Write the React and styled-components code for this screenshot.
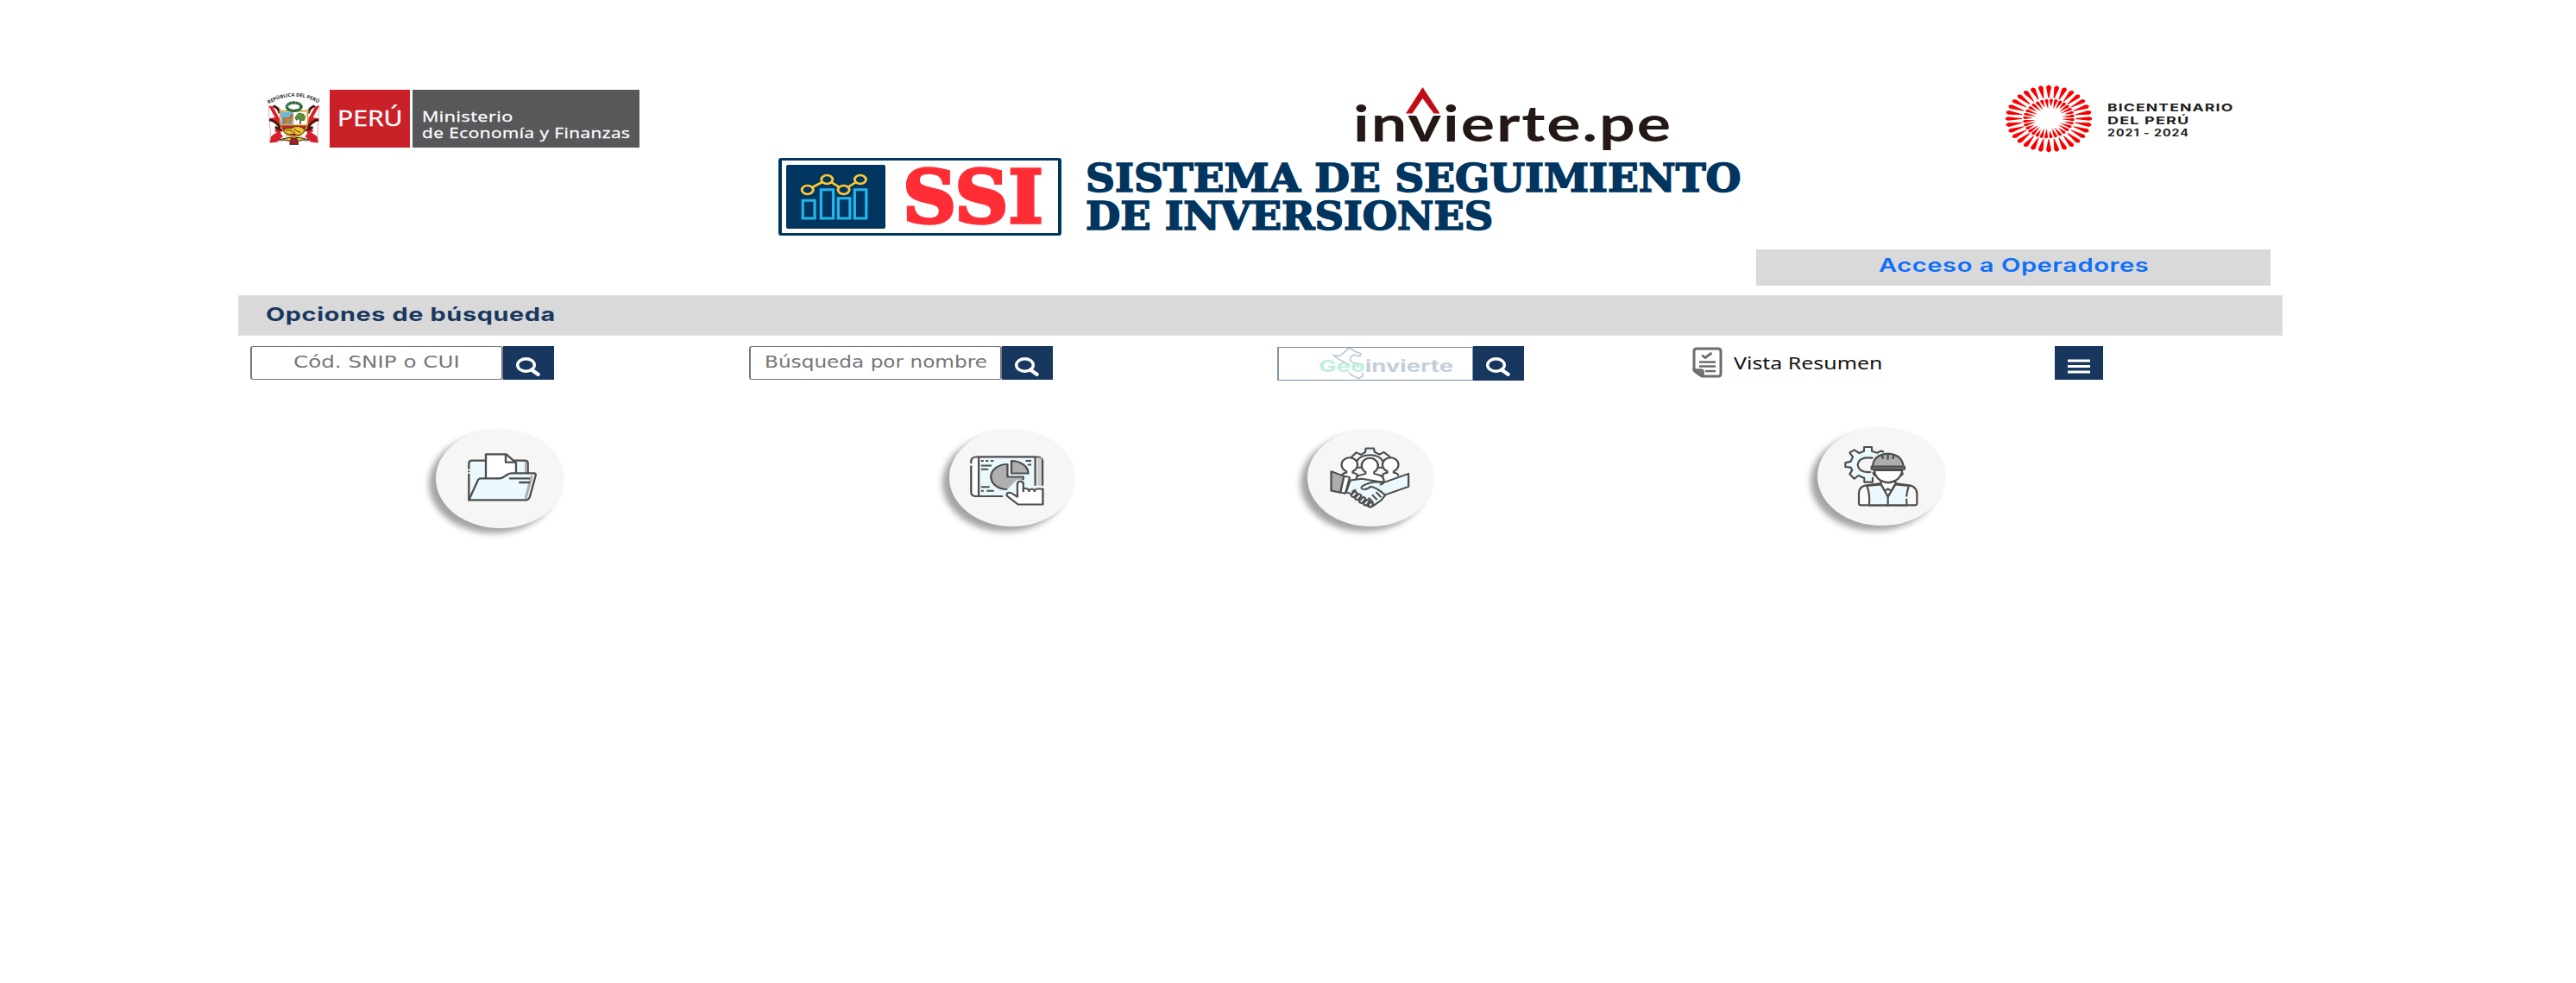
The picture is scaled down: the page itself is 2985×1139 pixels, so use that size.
import React, { useLayoutEffect, useRef, useState } from 'react';
import styled, { createGlobalStyle } from 'styled-components';

const navy = '#17375e';
const brand = '#00355f';
const ink = '#4d4d4d';
const ice = '#ebf9ff';

const Global = createGlobalStyle`
  * { box-sizing: border-box; }
  body { margin: 0; background: #fff; font-family: Inter, "Open Sans", sans-serif; }
`;

const Page = styled.main`
  display: flex;
  flex-direction: column;
  width: 2985px;
  height: 1139px;
  overflow: hidden;
  background: #fff;
`;

const FitBox = styled.span`
  display: block;
  flex: none;
  width: ${(p) => p.$w}px;
  height: ${(p) => p.$lh}px;
  margin: ${(p) => p.$m || '0'};
  white-space: nowrap;
  font-family: ${(p) => p.$font || 'Inter, sans-serif'};
  font-size: ${(p) => p.$size}px;
  font-weight: ${(p) => p.$weight || 400};
  line-height: ${(p) => p.$lh}px;
  letter-spacing: ${(p) => p.$ls || 0}px;
  -webkit-text-stroke: ${(p) => p.$stroke || 0}px ${(p) => p.$color};
  color: ${(p) => p.$color};
`;
const FitInner = styled.span`
  display: inline-block;
  transform-origin: 0 50%;
`;

/* Text stretched horizontally so that it fills a given width */
function Fit({ children, w, lh, m, font, size, weight, color, ls, stroke }) {
  const ref = useRef(null);
  const [k, setK] = useState(1);
  useLayoutEffect(() => {
    const natural = ref.current.offsetWidth;
    if (natural) setK(w / natural);
  }, [w]);
  return (
    <FitBox $w={w} $lh={lh} $m={m} $font={font} $size={size} $weight={weight} $color={color} $ls={ls} $stroke={stroke}>
      <FitInner ref={ref} style={{ transform: `scaleX(${k})` }}>{children}</FitInner>
    </FitBox>
  );
}

/* ---------- header ---------- */
const LogoRow = styled.header`
  display: flex;
  align-items: flex-start;
  height: 180px;
  padding: 95px 0 0 305px;
`;
const Ministry = styled.div`
  display: flex;
  gap: 3px;
  width: 436px;
  height: 67px;
  margin-top: 9px;
`;
const Emblem = styled.svg`
  width: 74px;
  height: 67px;
  flex: none;
`;
const RedBox = styled.div`
  width: 93px;
  height: 67px;
  padding: 12px 0 0 9px;
  background: #c92127;
`;
const GreyBox = styled.div`
  width: 263px;
  height: 67px;
  padding: 21px 0 0 11px;
  background: #58585a;
`;
const InvierteLogo = styled.svg`
  width: 376px;
  height: 84px;
  margin-left: 825px;
  flex: none;
`;
const Bicentenary = styled.div`
  display: flex;
  margin-left: 379px;
`;
const Burst = styled.svg`
  width: 106px;
  height: 84px;
  flex: none;
`;
const BicentenaryText = styled.div`
  display: flex;
  flex-direction: column;
  padding: 22px 0 0 15px;
`;

const TitleRow = styled.div`
  display: flex;
  align-items: flex-start;
  height: 109px;
  padding: 3px 0 0 902px;
`;
const SsiBox = styled.div`
  display: flex;
  width: 328px;
  height: 90px;
  padding: 5px 5px;
  border: solid ${brand};
  border-width: 3px 4px;
  border-radius: 3px;
`;
const ChartTile = styled.div`
  width: 115px;
  height: 74px;
  border-radius: 2px;
  background: ${brand};
`;
const ChartSvg = styled.svg`
  display: block;
  width: 115px;
  height: 74px;
`;
const Title = styled.h1`
  display: flex;
  flex-direction: column;
  margin: 0 0 0 28px;
`;

/* ---------- bars ---------- */
const AccessBar = styled.a`
  display: flex;
  justify-content: center;
  width: 596px;
  height: 42px;
  margin-left: 2035px;
  padding-top: 3px;
  background: #d9d9d9;
  text-decoration: none;
`;
const OptionsBar = styled.div`
  width: 2369px;
  height: 47px;
  margin: 11px 0 0 276px;
  padding: 5px 0 0 31px;
  border: 1px solid #dee2e6;
  background: #d9d9d9;
`;

const SearchRow = styled.div`
  display: flex;
  align-items: flex-start;
  height: 106px;
  padding: 12px 0 0 290px;
`;
const SearchGroup = styled.div`
  display: flex;
  height: 39px;
  margin-right: ${(p) => p.$gap}px;
`;
const Field = styled.div`
  display: flex;
  justify-content: center;
  width: 293px;
  height: 39px;
  padding-top: 4px;
  border: 1px solid #767676;
  border-left-width: 2px;
  border-right-width: 2px;
  border-radius: 3px;
`;
const GeoField = styled.div`
  width: 227px;
  height: 39px;
  margin-top: 1px;
  border: 1px solid #7f93a9;
  border-left-width: 2px;
`;
const GeoSvg = styled.svg`
  display: block;
  width: 224px;
  height: 37px;
`;
const IconButton = styled.button`
  display: flex;
  align-items: center;
  justify-content: center;
  width: ${(p) => p.$w || 59}px;
  height: ${(p) => p.$h || 39}px;
  padding: ${(p) => p.$pad || '8px 1px 0 0'};
  border: 0;
  background: ${navy};
`;
const Summary = styled.div`
  display: flex;
  width: 420px;
  height: 39px;
  margin-left: 195px;
`;
const DocSvg = styled.svg`
  width: 36px;
  height: 36px;
  margin: 1px 12px 0 -1px;
`;

/* ---------- round shortcuts ---------- */
const Shortcuts = styled.nav`
  display: flex;
  align-items: flex-start;
  padding-left: 505px;
`;
const Disc = styled.a`
  display: block;
  width: ${(p) => p.$w}px;
  height: ${(p) => p.$h}px;
  margin-left: ${(p) => p.$ml || 0}px;
  margin-top: ${(p) => p.$mt || 2}px;
  border-radius: 50%;
  background: #f6f6f6;
  box-shadow: -8px 6px 7px rgba(0, 0, 0, 0.36);
`;
const DiscSvg = styled.svg`
  display: block;
  width: 100%;
  height: 100%;
`;

const Search = () => (
  <svg width="30" height="22" viewBox="0 0 30 22" fill="none" stroke="#fff">
    <ellipse cx="12.5" cy="9" rx="9.8" ry="7.2" strokeWidth="3.4" />
    <path d="M19 14.5l7.5 5.2" strokeWidth="4.4" strokeLinecap="round" />
  </svg>
);

const rays = (n, fn) => Array.from({ length: n }, (_, i) => fn((i * 360) / n, i));

export default function App() {
  return (
    <Page>
      <Global />
      <LogoRow>
        <Ministry>
          <Emblem viewBox="105 42 222 201" preserveAspectRatio="none">
            <path id="arc" d="M124 92 Q212 38 302 92" fill="none" />
            <text fontFamily="Open Sans, sans-serif" fontSize="17" fontWeight="700" fill="#222">
              <textPath href="#arc" textLength="182" lengthAdjust="spacingAndGlyphs">REPÚBLICA DEL PERÚ</textPath>
            </text>
            <g strokeWidth="3">
              <path d="M124 98l36 6 30 32-4 82-58 8 2-40-4-44z" fill="#fff" stroke="#d9b6b6" />
              <path d="M300 98l-36 6-30 32 4 82 58 8-2-40 4-44z" fill="#fff" stroke="#d9b6b6" />
              <path d="M124 98l14 2 26 46 2 50-22-10 16-22-34-22 20-4zM300 98l-14 2-26 46-2 50 22-10-16-22 34-22-20-4z" fill="#d8202c" />
              <path d="M128 226l4-22 26-18 16 18-22 20zM296 226l-4-22-26-18-16 18 22 20z" fill="#d8202c" />
              <path d="M140 98q20 8 22 26M284 98q-20 8-22 26M126 146q22 2 38 28M298 146q-22 2-38 28M146 172l26 12M278 172l-26 12" fill="none" stroke="#4a1712" strokeWidth="9" />
              <path d="M160 216q30-10 52-8 22-2 52 8-24-2-40 6l-12 4-12-4q-16-8-40-6z" fill="#e9b82c" stroke="#3b2718" strokeWidth="3" />
              <path d="M202 212h20l5 20h-30z" fill="#b2182a" stroke="#3b2718" />
            </g>
            <path d="M163 116h98q-5 12 0 26-2 58-49 65-47-7-49-65 5-14 0-26z" fill="#fff" stroke="#c9a227" strokeWidth="5" />
            <path d="M168 119h41v45h-43q1-12 2-20-1-13 0-25z" fill="#6cb7e8" />
            <path d="M167 165h90q-7 33-45 39-38-6-45-39z" fill="#c92127" />
            <path d="M209 119v46M166 165h92" stroke="#c9a227" strokeWidth="3" />
            <path d="M176 160v-14l-3-6h24l6-14 5 5-4 12-4 4v13m-18-13v13" fill="#c7853c" stroke="#a9662a" strokeWidth="3" />
            <path d="M234 162v-22" stroke="#6b4a25" strokeWidth="5" />
            <path d="M220 148l-4-10 6-8 6-7 10 2 8 2 5 9-3 12-10 1-8-6z" fill="#5d8f3a" stroke="#27562b" strokeWidth="2" />
            <path d="M175 184q10-12 28-8 10-9 28-6 14 4 18 12-6 16-26 18-14-8-26-2-18-4-22-14z" fill="#f3c52f" stroke="#4b2c10" strokeWidth="3" />
            <path d="M183 184q18-6 34 10M212 178q8 8 22 12" fill="none" stroke="#4b2c10" strokeWidth="3" />
            <ellipse cx="212" cy="101" rx="25" ry="14" fill="none" stroke="#1d5a2c" strokeWidth="10" strokeDasharray="6 1" />
          </Emblem>
          <RedBox>
            <Fit w={76} lh={40} font='"Open Sans", sans-serif' size={25} color="#fff" stroke={0.4}>PERÚ</Fit>
          </RedBox>
          <GreyBox>
            <Fit w={105} lh={19} font='"Open Sans", sans-serif' size={17} color="#fff" stroke={0.3} ls={0.4}>Ministerio</Fit>
            <Fit w={241} lh={19} font='"Open Sans", sans-serif' size={17} color="#fff" stroke={0.3} ls={0.4}>de Economía y Finanzas</Fit>
          </GreyBox>
        </Ministry>

        <InvierteLogo viewBox="1566 95 376 84">
          <text x="1568" y="163.7" fontFamily="Lato, sans-serif" fontWeight="700" fontSize="57" letterSpacing="1.5" textLength="370" lengthAdjust="spacingAndGlyphs" fill="#231815">invierte.pe</text>
          <path d="M1629 131.6L1648.5 101l20 30.6h-7l-13-17.5-12 17.5z" fill="#c30d16" />
        </InvierteLogo>

        <Bicentenary>
          <Burst viewBox="-53 -42.5 106 84">
            <g transform="scale(1 0.77)" fill="#f90000">
              {rays(32, (a) => (
                <path key={a} transform={`rotate(${a})`} d="M-0.5 -31L-3 -47.5Q0 -53.5 3 -47.5L0.5 -31Z" />
              ))}
              {rays(32, (a, i) => (
                <path key={a} transform={`translate(${Math.cos((a * Math.PI) / 180) * 1.5} 0) rotate(${a + 3})`} d={`M0 ${i % 3 ? -15 : -18}L-2.1 -28Q0 -32 2.1 -28Z`} />
              ))}
            </g>
          </Burst>
          <BicentenaryText>
            <Fit w={147} lh={15} size={12.2} weight={700} ls={0.8} color="#1d1d1b">BICENTENARIO</Fit>
            <Fit w={96} lh={15} size={12.2} weight={700} ls={0.8} color="#1d1d1b">DEL PERÚ</Fit>
            <Fit w={95} lh={14} size={11.2} weight={700} ls={0.8} color="#1d1d1b">2021 - 2024</Fit>
          </BicentenaryText>
        </Bicentenary>
      </LogoRow>

      <TitleRow>
        <SsiBox>
          <ChartTile>
            <ChartSvg viewBox="60 50 316 222" preserveAspectRatio="none" fill="none">
              <g stroke="#22b5ea" strokeWidth="9">
                <path d="M113 174h38v62h-38zM171 136h39v100h-39zM226 166h37v70h-37zM278 136h37v100h-37z" />
              </g>
              <path d="M128 137L190 101 243 137 296 101" stroke="#fdc82f" strokeWidth="8" />
              <g stroke="#fdc82f" strokeWidth="8" fill={brand}>
                <ellipse cx="128" cy="137" rx="18" ry="15" />
                <ellipse cx="190" cy="101" rx="18" ry="15" />
                <ellipse cx="243" cy="137" rx="18" ry="15" />
                <ellipse cx="296" cy="101" rx="18" ry="15" />
              </g>
            </ChartSvg>
          </ChartTile>
          <Fit w={163} lh={74} m="1px 0 0 20px" font='"DejaVu Serif", serif' size={84} weight={700} stroke={3.5} color="#ff2d35">SSI</Fit>
        </SsiBox>
        <Title>
          <Fit w={760} lh={44} m="2px 0 0" font='"DejaVu Serif", serif' size={44} weight={700} stroke={1.6} color={brand}>SISTEMA DE SEGUIMIENTO</Fit>
          <Fit w={472} lh={44} font='"DejaVu Serif", serif' size={44} weight={700} stroke={1.6} color={brand}>DE INVERSIONES</Fit>
        </Title>
      </TitleRow>

      <AccessBar>
        <Fit w={313} lh={30} size={21.5} weight={600} ls={0.4} color="#0d6efd">Acceso a Operadores</Fit>
      </AccessBar>
      <OptionsBar>
        <Fit w={336} lh={32} size={22} weight={700} ls={0.5} color={navy}>Opciones de búsqueda</Fit>
      </OptionsBar>

      <SearchRow>
        <SearchGroup $gap={226}>
          <Field>
            <Fit w={193} lh={28} font='"DejaVu Sans", sans-serif' size={19.5} color="#767676">Cód. SNIP o CUI</Fit>
          </Field>
          <IconButton><Search /></IconButton>
        </SearchGroup>
        <SearchGroup $gap={260}>
          <Field>
            <Fit w={258} lh={28} font='"DejaVu Sans", sans-serif' size={19.5} color="#767676">Búsqueda por nombre</Fit>
          </Field>
          <IconButton><Search /></IconButton>
        </SearchGroup>
        <SearchGroup $gap={0}>
          <GeoField>
            <GeoSvg viewBox="66 39 672 111" preserveAspectRatio="none">
              <path d="M312 98l-24-12-22-12-9-9 18 3 24-18 6-10 14 3 10 8 22 8-4 10-20-6-12 8-2 12 12 8 20 2M308 124l14 12 22 10 12-8 2-14" fill="none" stroke="#bcc9d6" strokeWidth="5" />
              <text x="204" y="124" fontFamily="Inter, sans-serif" fontWeight="700" fontSize="58" textLength="468" lengthAdjust="spacingAndGlyphs" fill="#c3ceda">
                <tspan fill="#c0efd9">Geo</tspan>invierte
              </text>
              <circle cx="340" cy="103" r="6" fill="#c0efd9" />
            </GeoSvg>
          </GeoField>
          <IconButton $h={40}><Search /></IconButton>
        </SearchGroup>
        <Summary>
          <DocSvg viewBox="0 0 36 36" fill="none" stroke="#6c6c6c" strokeWidth="3">
            <path d="M3 27V5q0-3 3-3h25q3 0 3 3v26q0 3-3 3H13q-2 0-4-2l-4-3q-2-1-2-2z" />
            <path d="M3 26h8q3 0 3 3v5z" fill="#777" strokeWidth="1.6" />
            <path d="M12 9.5l4 3L23.5 7" strokeWidth="2.8" />
            <path d="M9 17.500h19M9 22.500h19M16 28h12" strokeWidth="2.4" />
          </DocSvg>
          <Fit w={172} lh={28} m="6px 0 0 1px" font='"Noto Sans", sans-serif' size={20} color="#111">Vista Resumen</Fit>
        </Summary>
        <IconButton $w={56} $pad="8px 0 0 0">
          <svg width="26" height="17" viewBox="0 0 26 17" fill="none" stroke="#fff" strokeWidth="3.2">
            <path d="M0 2h26M0 8.500h26M0 15h26" />
          </svg>
        </IconButton>
      </SearchRow>

      <Shortcuts>
        <Disc $w={149} $h={115}>
          <DiscSvg viewBox="75 50 447 345" preserveAspectRatio="none" fill="none" stroke={ink} strokeWidth="7" strokeLinejoin="round">
            <path d="M190 297V170q0-10 10-10h185q10 0 10 10v60z" fill={ice} />
            <path d="M384 164h8v40h-8zM408 210h9l-20 76-12 8z" fill="#adadad" stroke="none" />
            <path d="M249 225V138h71l34 30v52z" fill="#fff" />
            <path d="M318 138v28h36" />
            <path d="M190 297l32-70q3-5 10-5h63q10 0 17-6l13-8q5-4 13-4h80q6 2 4 8l-20 73q-4 12-14 12z" fill={ice} />
            <path d="M409 212l-22 80" stroke="#adadad" strokeWidth="9" />
            <path d="M330 222h72M364 236h38" />
            <path d="M184 193h13M184 203h13" stroke="#f6f6f6" strokeWidth="5" />
          </DiscSvg>
        </Disc>
        <Disc $w={146} $h={113} $ml={446}>
          <DiscSvg viewBox="52 50 381 340" preserveAspectRatio="none" fill="none" stroke={ink} strokeWidth="6" strokeLinejoin="round">
            <rect x="118" y="148" width="216" height="137" rx="14" fill="#fff" />
            <path d="M141 148h171v137H141z" fill={ice} />
            <path d="M318 151h13v134h-13z" fill="#ccc" stroke="none" />
            <path d="M148 161h8m6 0h8m7 0h9M148 178h32M148 191h22M283 161h17M289 175h11M148 252h26M148 266h8m9 0h22" />
            <path d="M228 173v44h48a49 44 0 1 1-48-44z" fill="#b0b0b0" />
            <path d="M240 161a51 44 0 0 1 51 44h-51z" fill="#b0b0b0" />
            <path d="M215 290v-14l40-48h24l6 20h56v44z" fill={ice} stroke="none" />
            <path d="M318 249h24v22h-24zM113 170h10v8h-10zM215 281h30v10h-30z" fill="#f6f6f6" stroke="none" />
            <path d="M258 287v-45q0-9 9-9t9 9v16q9-3 17 5 9-6 17 0 9-6 15-4h10v54h-75l-33-29q-5-9 5-12 9 0 16 8z" fill="#fff" />
            <path d="M276 257v13M293 262v8M310 262v8" />
          </DiscSvg>
        </Disc>
        <Disc $w={147} $h={113} $ml={269}>
          <DiscSvg viewBox="1137 50 384 340" preserveAspectRatio="none" fill="none" stroke={ink} strokeWidth="6" strokeLinejoin="round">
            <path d="M1283 165l-16-13 18-20 14 8 13-9 2-13h24l3 13 14 8 14-8 18 17-16 18z" fill={ice} />
            <path d="M1285 165q10-24 41-24t41 24v20h-82z" fill="#f6f6f6" />
            <path d="M1241 214q0-9 14-11v-5a24 25 0 1 1 19 0v5q10 2 14 7v18M1412 214q0-9-14-11v-5a24 25 0 1 0-19 0v5q-12 2-14 7v18" fill="#fff" />
            <path d="M1283 232q0-20 18-22l12-4v-6a25 26 0 1 1 26 0v6l12 4q17 2 18 25z" fill="#fff" />
            <path d="M1254 270l13-41 35-5 42 8 24 5 75-31v45l-69 28-14 20-25 20q-8 8-20-4l-40-36z" fill={ice} />
            <path d="M1209 198l39 17-11 57-28-7z" fill="#adadad" />
            <path d="M1248 214l17 5-13 56-15-4z" fill="#fff" />
            <path d="M1366 237q-35-8-62 12-9 9 3 12 12 0 22-10 18 4 44 30M1345 270l15 18M1333 280l15 17M1322 290l14 16" fill={ice} />
            <g fill={ice}>
              <rect x="-5" y="-10" width="11" height="20" rx="5" transform="translate(1278 278) rotate(40)" />
              <rect x="-5" y="-11" width="11" height="22" rx="5" transform="translate(1290 287) rotate(40)" />
              <rect x="-5" y="-11" width="11" height="22" rx="5" transform="translate(1303 298) rotate(40)" />
              <rect x="-5" y="-10" width="11" height="20" rx="5" transform="translate(1315 307) rotate(40)" />
              <rect x="-5" y="-8" width="11" height="16" rx="5" transform="translate(1328 314) rotate(35)" />
            </g>
            <path d="M1285 263q-7-2-13 8M1368 239l-12 6" />
          </DiscSvg>
        </Disc>
        <Disc $w={149} $h={114} $ml={444} $mt={0.1}>
          <DiscSvg viewBox="78 45 447 342" preserveAspectRatio="none" fill="none" stroke={ink} strokeWidth="6.500" strokeLinejoin="round" strokeLinecap="round">
            <path d="M268 200v36h-27v-14l-20-9-15 11-16-16 9-14-5-9-19-2v-14l19-5 7-16-11-15 16-9 17 11 17-7v-14h27v14l18 6 13-6 9 4-35 30z" fill={ice} stroke="none" />
            <path d="M262 202q-44 2-44-26 2-28 50-25v50z" fill="#f6f6f6" stroke="none" />
            <path d="M270 221v15h-29v-14l-20-9-15 11-16-16 9-14-5-9-19-2v-14l19-5 7-16-11-15 16-9 17 11 17-7v-14h27v14l18 6 13-6 9 2M269 152q-48-6-51 24 4 28 44 25" />
            <path d="M275 195q8 40 48 42 42-2 50-42z" fill="#fff" />
            <path d="M275 203q-8 0 3 10M372 203q6 2-3 10" />
            <path d="M222 309v-34q0-22 22-27l57-8 22 22 24-22 55 8q22 6 22 30v31q0 7-7 7H229q-7 0-7-7z" fill="#f9f9f9" />
            <path d="M250 249q11 26 8 67h131q-5-36 7-67l-47-5-26 42-24-42z" fill={ice} />
            <path d="M299 232v10l13 24 11-7 12 7 14-24v-10q-24 12-50 0zM312 266l11 20 12-20M323 286v30" fill="#fff" />
            <path d="M383 290h12" stroke={ice} />
            <path d="M270 183q2-43 53-46 50 3 54 46z" fill="#adadad" />
            <path d="M266 182h115v9H266z" fill="#999" />
            <path d="M323 139v17M303 145l3 8M343 145l-3 8" />
          </DiscSvg>
        </Disc>
      </Shortcuts>
    </Page>
  );
}
